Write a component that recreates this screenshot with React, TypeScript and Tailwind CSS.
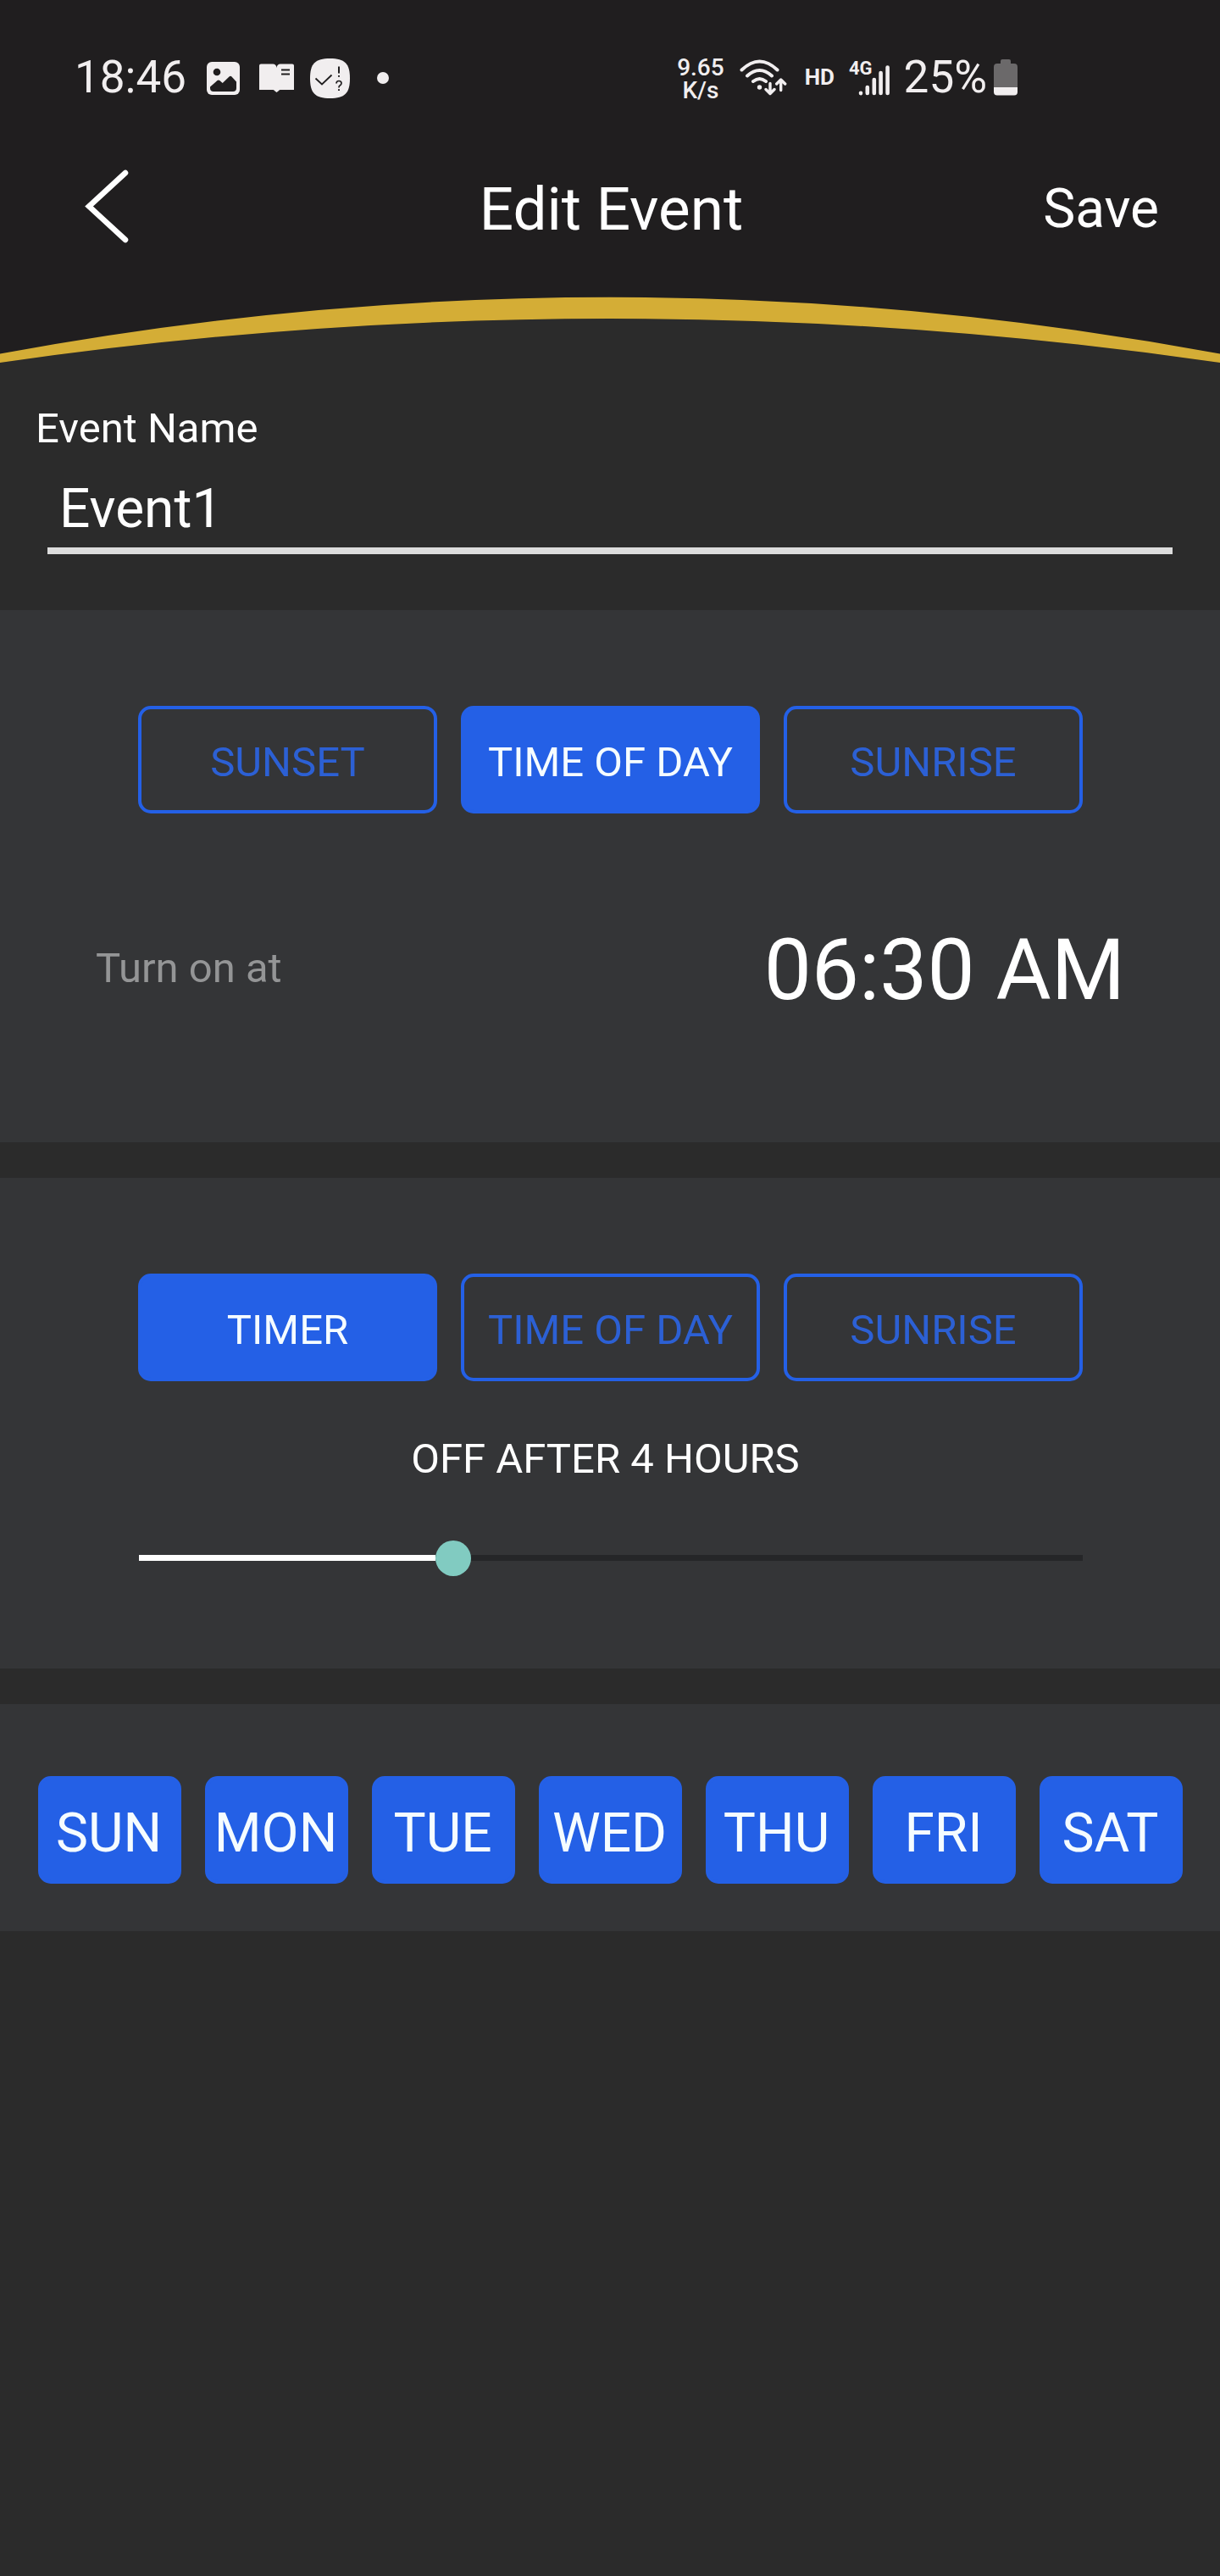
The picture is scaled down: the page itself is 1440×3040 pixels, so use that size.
import React, { useState } from "react";
import clsx from "clsx";

const DAYS = ["SUN", "MON", "TUE", "WED", "THU", "FRI", "SAT"];
const MAX_HOURS = 12;

const ImageIcon = () => (
  <svg width="39" height="39" viewBox="0 0 39 39">
    <rect width="39" height="39" rx="6" fill="#f1eeef" />
    <circle cx="12" cy="12" r="4.3" fill="#201e1f" />
    <path
      d="M4 29.5 12.5 22q1.4-1.2 2.8 0l3.4 3L26.500 17.500q1.500-1.300 3 0L35 23.500V31q0 4-4 4H8q-4 0-4-4z"
      fill="#201e1f"
    />
  </svg>
);

const BookIcon = () => (
  <svg width="42" height="34" viewBox="0 0 42 34">
    <path
      d="M2 .5H16q4 0 4.500 4.500 .5-4.500 4.500-4.500H39q2 0 2 2V31H24.500q-1 0-2 1.500L20.500 34l-2-1.500Q17.500 31 16.500 31H0V2.500Q0 .5 2 .5z"
      fill="#f1eeef"
    />
    <path d="M26 7.500h10M26 12.500h10" stroke="#201e1f" strokeWidth="2.200" />
  </svg>
);

const CheckBadgeIcon = () => (
  <svg width="47" height="47" viewBox="0 0 47 47">
    <path
      d="M23.500 0C41 0 47 6 47 23.500S41 47 23.500 47 0 41 0 23.500 6 0 23.500 0z"
      fill="#f1eeef"
    />
    <path d="M6.500 23.500 14 30.500 25.500 19.500" fill="none" stroke="#201e1f" strokeWidth="1.800" />
    <path d="M34 9.500v8M34 20v1.800M34 36.300v1.800" stroke="#201e1f" strokeWidth="2" />
    <path
      d="M31 29.500q0-3 3-3t3 2.800q0 1.600-1.600 2.500T34 34.500"
      fill="none"
      stroke="#201e1f"
      strokeWidth="1.700"
    />
  </svg>
);

const WifiIcon = () => (
  <svg
    width="56"
    height="44"
    viewBox="0 0 56 44"
    fill="none"
    stroke="#f1eeef"
    strokeWidth="4"
    strokeLinecap="round"
    strokeLinejoin="round"
  >
    <path d="M2.500 13.500q21-20 42 0M9 20.500q14.500-13 29 0M16 27q7.500-6 15 0" />
    <circle cx="23.500" cy="34" r="2.700" fill="#f1eeef" stroke="none" />
    <path d="M36 29.500V41m-5-4.500 5 5 5-5M48.700 37.500V26m-5 4 5-5 5 5" strokeWidth="3.400" />
  </svg>
);

const SignalIcon = () => (
  <svg
    width="38"
    height="38"
    viewBox="0 0 38 38"
    stroke="#f1eeef"
    strokeWidth="4.600"
    strokeLinecap="round"
  >
    <path d="M3 34.700v.4M10.800 28v7M18.800 19v16M26.600 11v24M34.600 4.500v30.500" />
  </svg>
);

const BatteryIcon = () => (
  <svg width="28" height="43" viewBox="0 0 28 43">
    <path
      d="M8 5V2q0-2 2-2h8q2 0 2 2v3h4q4 0 4 4v24H0V9q0-4 4-4z"
      fill="#6b696a"
    />
    <path d="M0 33h28v5.500q0 4-4 4H4q-4 0-4-4z" fill="#f1eeef" />
  </svg>
);

type ToggleProps = {
  label: string;
  active: boolean;
  onClick: () => void;
};

const Toggle = ({ label, active, onClick }: ToggleProps) => (
  <button
    onClick={onClick}
    className={clsx(
      "flex h-[127px] flex-1 items-center justify-center whitespace-nowrap rounded-[15px] border-4 border-[#2460e6] pt-1.5 text-[49px] leading-none",
      active ? "bg-[#2460e6] text-[#f5fcff]" : "text-[#2c60d4]"
    )}
  >
    {label}
  </button>
);

type ToggleGroupProps = {
  options: string[];
  value: string;
  onChange: (value: string) => void;
};

const ToggleGroup = ({ options, value, onChange }: ToggleGroupProps) => (
  <div className="flex gap-7">
    {options.map((option) => (
      <Toggle
        key={option}
        label={option}
        active={option === value}
        onClick={() => onChange(option)}
      />
    ))}
  </div>
);

const StatusBar = () => (
  <div className="flex h-[182px] items-center pl-[88px] pr-[239px] text-[53px] leading-[64px] text-[#f1eeef]">
    <span className="w-[156px]">18:46</span>
    <div className="flex flex-1 items-center pt-0.5">
      <ImageIcon />
      <div className="ml-[23px]">
        <BookIcon />
      </div>
      <div className="ml-[18px]">
        <CheckBadgeIcon />
      </div>
      <div className="ml-8 h-3.5 w-3.5 rounded-full bg-[#f1eeef]" />
    </div>
    <div className="mr-[18px] pt-1 text-center text-[28px] font-medium leading-[27px]">
      <div>9.65</div>
      <div>K/s</div>
    </div>
    <WifiIcon />
    <span className="ml-[21px] text-[26px] font-bold">HD</span>
    <div className="ml-[17px] flex h-[43px] items-start">
      <span className="text-[22px] font-bold leading-[22px]">4G</span>
      <div className="-ml-[17px] mt-[5px]">
        <SignalIcon />
      </div>
    </div>
    <span className="ml-4">25%</span>
    <div className="ml-2">
      <BatteryIcon />
    </div>
  </div>
);

const App = () => {
  const [name, setName] = useState("Event1");
  const [turnOn, setTurnOn] = useState("TIME OF DAY");
  const [turnOff, setTurnOff] = useState("TIMER");
  const [days, setDays] = useState(DAYS);
  const hours = 4;

  const toggleDay = (day: string) =>
    setDays(days.includes(day) ? days.filter((d) => d !== day) : [...days, day]);

  return (
    <main className="flex min-h-[3040px] w-[1440px] flex-col bg-[#2b2b2b] font-['Roboto',sans-serif] text-white">
      <header className="bg-[#201e1f]">
        <StatusBar />
        <div className="grid h-[126px] grid-cols-3 items-center pl-[99px] pr-[96px]">
          <button aria-label="Back" className="pb-0.5">
            <svg width="54" height="88" viewBox="0 0 54 88" fill="none">
              <path
                d="M49 4 6 43.500 49 83"
                stroke="white"
                strokeWidth="6.500"
                strokeLinecap="round"
              />
            </svg>
          </button>
          <h1 className="pt-0.5 text-center text-[71px] leading-none">Edit Event</h1>
          <button className="-mr-6 pt-1 text-right text-[64px]">Save</button>
        </div>
        <svg className="block" width="1440" height="132" viewBox="0 0 1440 132">
          <path d="M0 120Q720 16 1440 120V132H0z" fill="#2b2b2b" />
          <path d="M0 109.500Q720-24 1440 109.500V120Q720 16 0 120z" fill="#d4ad36" />
        </svg>
      </header>

      <section className="px-14 pb-[66px] pt-[38px]">
        <label htmlFor="name" className="-ml-3.5 block text-[49px] leading-[56px]">
          Event Name
        </label>
        <input
          id="name"
          value={name}
          onChange={(e) => setName(e.target.value)}
          className="mt-7 block h-[92px] w-full border-b-8 border-[#dcdcdc] bg-transparent pb-[7px] pl-3.5 text-[64px] outline-none"
        />
      </section>

      <section className="h-[628px] bg-[#343537] pl-[163px] pr-[162px] pt-[113px]">
        <ToggleGroup
          options={["SUNSET", "TIME OF DAY", "SUNRISE"]}
          value={turnOn}
          onChange={setTurnOn}
        />
        <div className="-ml-[50px] -mr-[50px] mt-[125px] flex h-[120px] items-center justify-between">
          <span className="-mt-1 text-[49px] text-[#949596]">Turn on at</span>
          <span className="text-[100px] leading-[120px]">06:30 AM</span>
        </div>
      </section>

      <section className="mt-[42px] h-[579px] bg-[#343537] pl-[163px] pr-[162px] pt-[113px]">
        <ToggleGroup
          options={["TIMER", "TIME OF DAY", "SUNRISE"]}
          value={turnOff}
          onChange={setTurnOff}
        />
        <p className="mt-16 pr-3 text-center text-[49px] leading-[56px]">
          OFF AFTER {hours} HOURS
        </p>
        <div className="mt-[68px] flex items-center pl-px">
          <div
            className="mb-0.5 h-[7px] bg-white"
            style={{ width: `${(hours / MAX_HOURS) * 100 - 1.9}%` }}
          />
          <div className="h-[42px] w-[42px] rounded-full bg-[#81cbc1]" />
          <div className="mb-0.5 h-[7px] flex-1 bg-[#252628]" />
        </div>
      </section>

      <section className="mt-[42px] flex h-[268px] gap-7 bg-[#343537] pl-[45px] pr-11 pt-[85px]">
        {DAYS.map((day) => (
          <button
            key={day}
            onClick={() => toggleDay(day)}
            className={clsx(
              "flex h-[127px] flex-1 items-center justify-center rounded-[15px] border-4 border-[#2460e6] pr-0.5 pt-2 text-[64px]",
              days.includes(day) ? "bg-[#2460e6] text-[#f5fcff]" : "text-[#2c60d4]"
            )}
          >
            {day}
          </button>
        ))}
      </section>
    </main>
  );
};

export default App;
